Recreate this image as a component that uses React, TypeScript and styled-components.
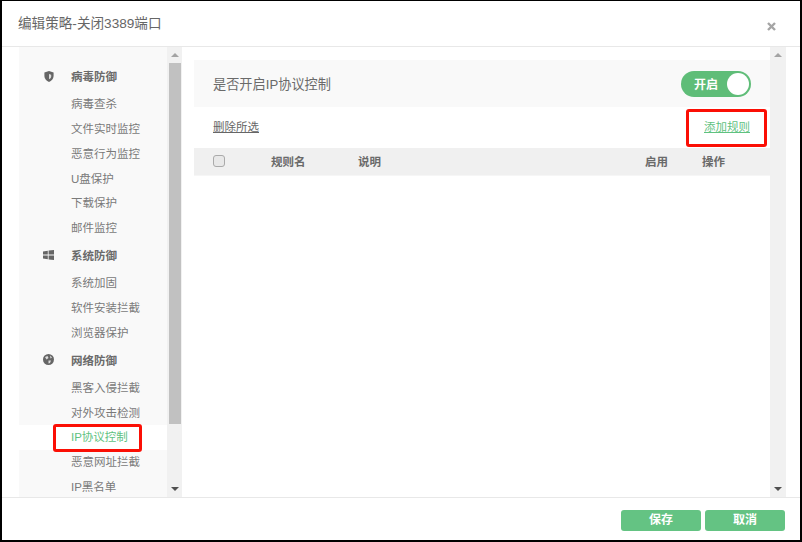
import React from "react";
import styled, { createGlobalStyle } from "styled-components";

const GlobalStyle = createGlobalStyle`
  html, body {
    margin: 0;
    padding: 0;
    background: #fff;
    font-family: "Liberation Sans", "Noto Sans CJK SC", sans-serif;
  }
  * { box-sizing: border-box; }
`;

const Dialog = styled.div`
  position: relative;
  display: flex;
  flex-direction: column;
  width: 802px;
  height: 542px;
  border: 1px solid #000;
  border-left-width: 2px;
  border-right-width: 2px;
  border-bottom-width: 2px;
  background: #fff;
  overflow: hidden;
`;

const Header = styled.header`
  display: flex;
  align-items: center;
  justify-content: space-between;
  flex: 0 0 46px;
  padding: 0 24px 3px 16px;
  border-bottom: 1px solid #e8e8e8;
`;

const Title = styled.h1`
  margin: 0;
  font-size: 13.6px;
  font-weight: 400;
  color: #666;
`;

const Close = styled.span`
  display: flex;
  margin-top: 9px;
`;

const Body = styled.div`
  display: flex;
  flex: 0 0 451px;
  height: 451px;
  padding-left: 17px;
  border-bottom: 1px solid #e8e8e8;
`;

const Sidebar = styled.nav`
  flex: 0 0 148px;
  padding-top: 15px;
  background: #f9f9f9;
  overflow: hidden;
`;

const Group = styled.div`
  display: flex;
  align-items: center;
  height: 26px;
  margin: 1px 0 3px;
  padding-left: 24px;
  font-size: 11.5px;
  font-weight: 700;
  color: #6a6a6a;
`;

const GroupIcon = styled.span`
  display: flex;
  justify-content: center;
  width: 11px;
  margin-right: 17px;
`;

const Item = styled.div<{ $active?: boolean }>`
  height: 24.86px;
  line-height: 24.86px;
  padding-left: 52px;
  font-size: 11.5px;
  color: ${(p) => (p.$active ? "#5fc27f" : "#7a7a7a")};
  background: ${(p) => (p.$active ? "#fff" : "transparent")};
`;

const Scrollbar = styled.div<{ $width: number }>`
  display: flex;
  flex-direction: column;
  align-items: center;
  flex: 0 0 ${(p) => p.$width}px;
  background: #f1f1f1;
`;

const Arrow = styled.span<{ $down?: boolean }>`
  flex: 0 0 16px;
  display: flex;
  align-items: center;
  justify-content: center;
  &::before {
    content: "";
    border-left: 4px solid transparent;
    border-right: 4px solid transparent;
    ${(p) => (p.$down ? "border-top: 4px solid #505050;" : "border-bottom: 4px solid #a3a3a3;")}
  }
`;

const Thumb = styled.div`
  width: 12px;
  height: 361px;
  background: #c1c1c1;
`;

const Track = styled.div`
  flex: 1;
`;

const Gutter = styled.div`
  flex: 0 0 12px;
`;

const Main = styled.main`
  flex: 0 0 576px;
  padding-top: 13px;
`;

const SwitchRow = styled.div`
  display: flex;
  align-items: center;
  justify-content: space-between;
  height: 47px;
  padding: 0 19px;
  background: #f9f9f9;
  font-size: 13.2px;
  color: #6a6a6a;
`;

const SwitchLabel = styled.span`
  margin-top: -1px;
`;

const Toggle = styled.div`
  display: flex;
  align-items: center;
  justify-content: space-between;
  width: 70px;
  height: 26px;
  padding: 0 2px 0 13px;
  border-radius: 13px;
  background: #5fbd78;
  font-size: 12px;
  font-weight: 700;
  color: #fff;
`;

const Knob = styled.span`
  width: 22px;
  height: 22px;
  border-radius: 50%;
  background: #fff;
`;

const ActionRow = styled.div`
  display: flex;
  align-items: center;
  justify-content: space-between;
  height: 41px;
  padding: 0 20px 4px 19px;
  font-size: 11.5px;
`;

const TextLink = styled.a<{ $green?: boolean }>`
  color: ${(p) => (p.$green ? "#5fc27f" : "#666")};
  text-decoration: underline;
`;

const TableHead = styled.div`
  display: grid;
  grid-template-columns: 58px 87px 1fr 57px 68px;
  align-items: center;
  height: 28px;
  padding: 0 0 2px 19px;
  background: #f0f0f0;
  border-bottom: 1px solid #f6f6f6;
  font-size: 11.5px;
  font-weight: 700;
  color: #6a6a6a;
`;

const Checkbox = styled.span`
  width: 12px;
  height: 12px;
  border: 1px solid #aaa;
  border-radius: 3px;
  background: #e8e8e8;
`;

const Footer = styled.footer`
  display: flex;
  justify-content: flex-end;
  gap: 4px;
  padding: 12px 15px 0 0;
`;

const Button = styled.button`
  width: 80px;
  height: 21px;
  padding: 0;
  border: none;
  border-radius: 3px;
  background: #64c383;
  color: #fff;
  font-family: inherit;
  font-size: 12px;
  font-weight: 700;
  line-height: 21px;
`;

const Callout = styled.div<{ $x: number; $y: number; $w: number; $h: number }>`
  position: absolute;
  left: ${(p) => p.$x}px;
  top: ${(p) => p.$y}px;
  width: ${(p) => p.$w}px;
  height: ${(p) => p.$h}px;
  border: 3px solid #fb0f05;
  border-radius: 3px;
`;

const ShieldIcon = () => (
  <svg width="10" height="11" viewBox="0 0 10 11">
    <path d="M5 0 L9.6 1.6 V5 C9.6 8 7.4 9.9 5 11 C2.6 9.9 .4 8 .4 5 V1.6 Z" fill="#666" />
    <path d="M5 3 L7.2 3.8 V5.4 C7.2 6.7 6.1 7.6 5 8.2 Z" fill="#ddd" />
  </svg>
);

const WindowsIcon = () => (
  <svg width="11" height="10" viewBox="0 0 11 10">
    <path d="M0 1.4 L4.8 .7 V4.6 H0 Z M5.6 .6 L11 0 V4.6 H5.6 Z M0 5.4 H4.8 V9.3 L0 8.6 Z M5.6 5.4 H11 V10 L5.6 9.4 Z" fill="#666" />
  </svg>
);

const GlobeIcon = () => (
  <svg width="11" height="11" viewBox="0 0 11 11">
    <circle cx="5.5" cy="5.5" r="5.5" fill="#666" />
    <path d="M2 3 L4.5 2 L5.5 4 L3.5 5.5 Z M7 1.5 L9 3.5 L7.5 4.5 Z M5.5 6.5 L8 6.5 L7 9 L5.5 9.5 Z" fill="#ddd" />
  </svg>
);

const menu = [
  { title: "病毒防御", icon: <ShieldIcon />, items: ["病毒查杀", "文件实时监控", "恶意行为监控", "U盘保护", "下载保护", "邮件监控"] },
  { title: "系统防御", icon: <WindowsIcon />, items: ["系统加固", "软件安装拦截", "浏览器保护"] },
  { title: "网络防御", icon: <GlobeIcon />, items: ["黑客入侵拦截", "对外攻击检测", "IP协议控制", "恶意网址拦截", "IP黑名单"] },
];

export default function App() {
  return (
    <>
      <GlobalStyle />
      <Dialog>
        <Header>
          <Title>编辑策略-关闭3389端口</Title>
          <Close>
            <svg width="9" height="9" viewBox="0 0 9 9">
              <path d="M1 1 L8 8 M8 1 L1 8" stroke="#a5a5a5" strokeWidth="2.4" />
            </svg>
          </Close>
        </Header>
        <Body>
          <Sidebar>
            {menu.map((g) => (
              <React.Fragment key={g.title}>
                <Group>
                  <GroupIcon>{g.icon}</GroupIcon>
                  {g.title}
                </Group>
                {g.items.map((i) => (
                  <Item key={i} $active={i === "IP协议控制"}>{i}</Item>
                ))}
              </React.Fragment>
            ))}
          </Sidebar>
          <Scrollbar $width={15}>
            <Arrow />
            <Thumb />
            <Track />
            <Arrow $down />
          </Scrollbar>
          <Gutter />
          <Main>
            <SwitchRow>
              <SwitchLabel>是否开启IP协议控制</SwitchLabel>
              <Toggle>
                开启
                <Knob />
              </Toggle>
            </SwitchRow>
            <ActionRow>
              <TextLink>删除所选</TextLink>
              <TextLink $green>添加规则</TextLink>
            </ActionRow>
            <TableHead>
              <Checkbox />
              <span>规则名</span>
              <span>说明</span>
              <span>启用</span>
              <span>操作</span>
            </TableHead>
          </Main>
          <Scrollbar $width={16}>
            <Arrow />
            <Track />
            <Arrow $down />
          </Scrollbar>
        </Body>
        <Footer>
          <Button>保存</Button>
          <Button>取消</Button>
        </Footer>
        <Callout $x={51} $y={423} $w={89} $h={28} />
        <Callout $x={684} $y={108} $w={81} $h={38} />
      </Dialog>
    </>
  );
}
